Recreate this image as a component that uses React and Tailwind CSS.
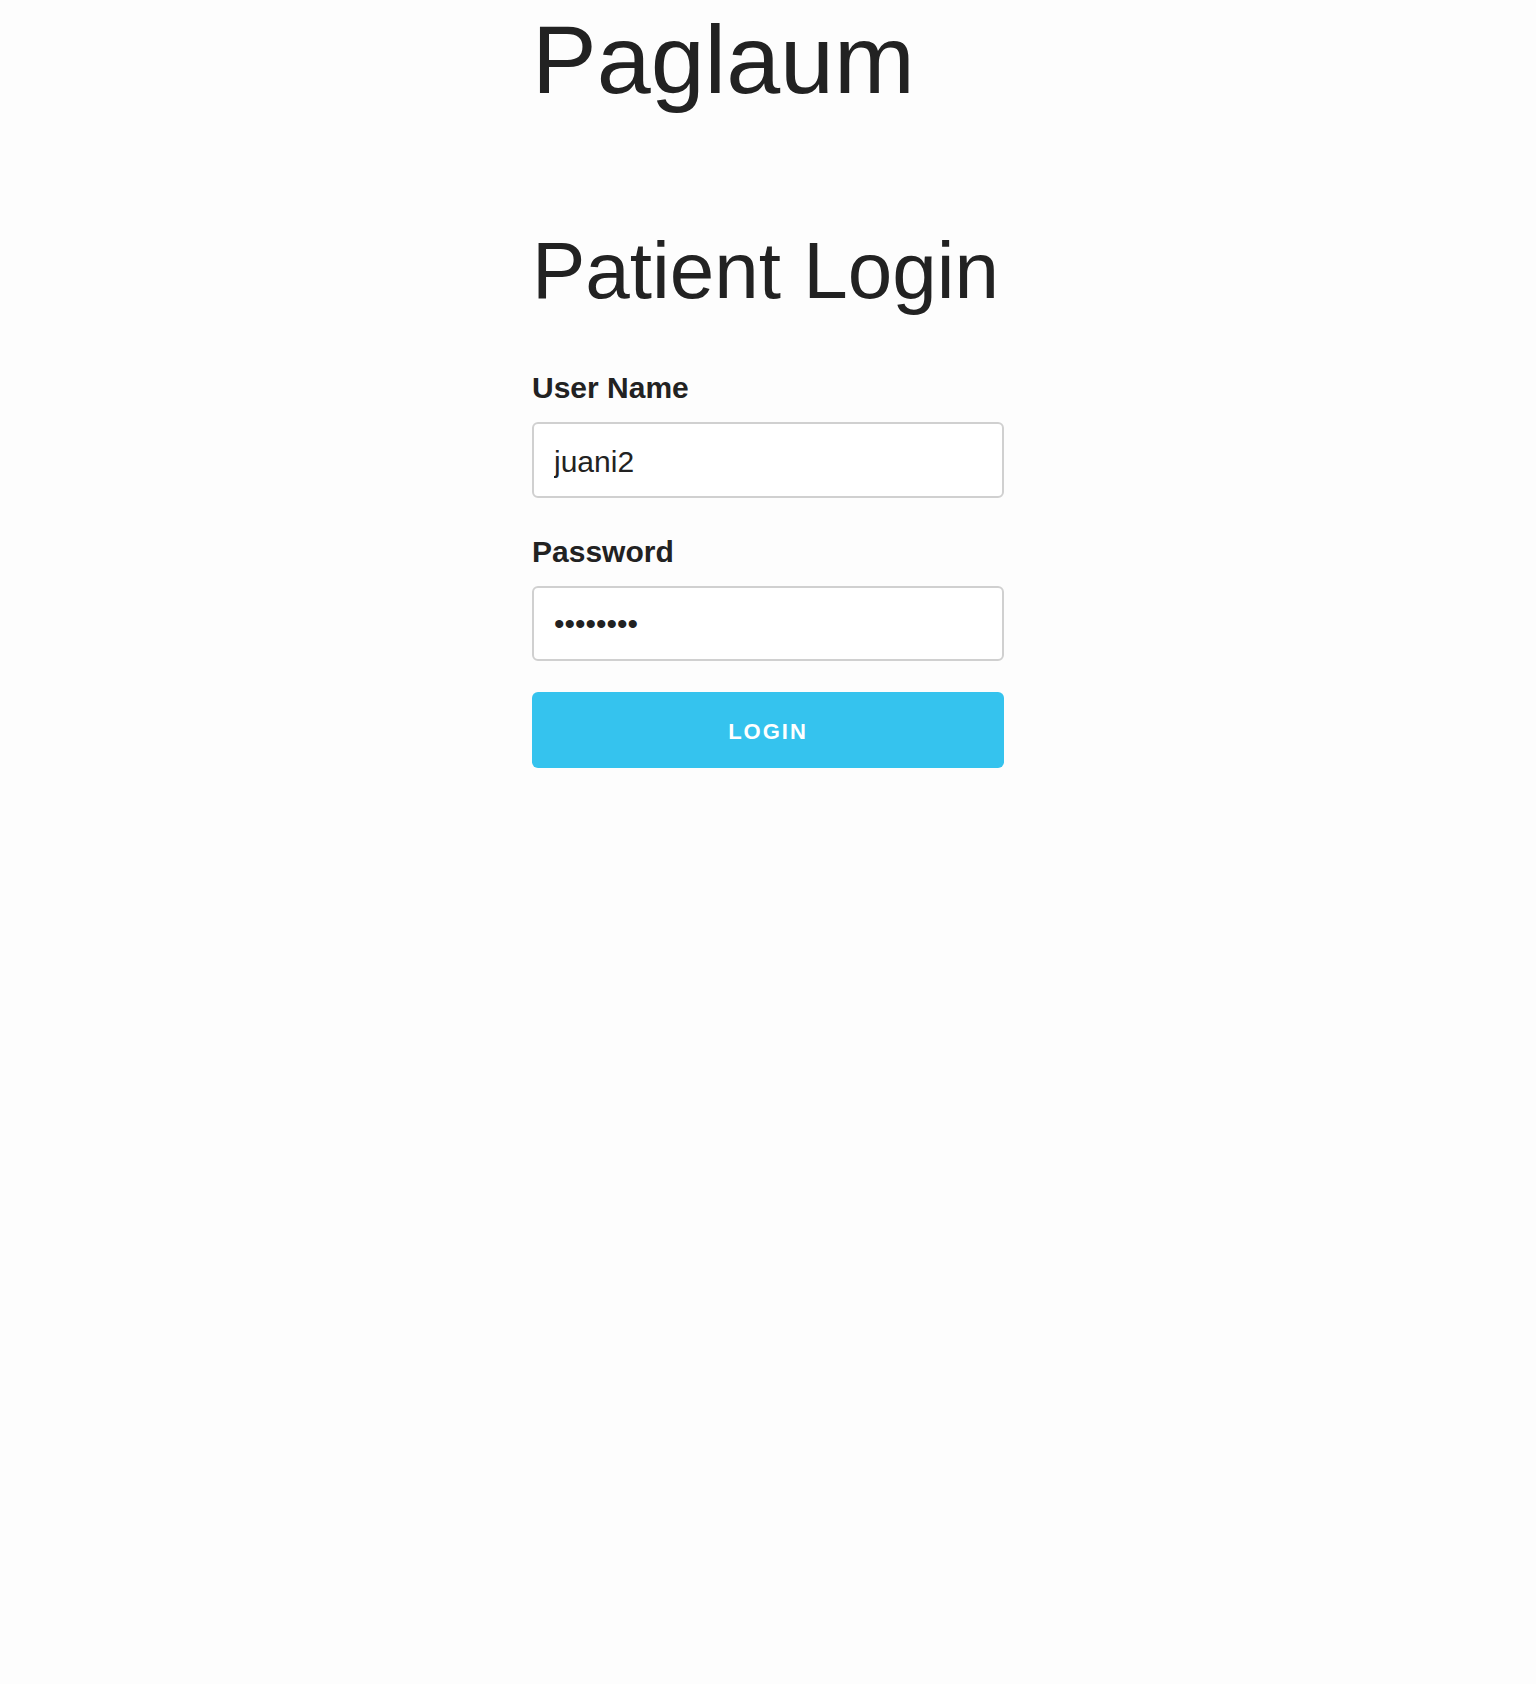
import React, { useState } from 'react';

const App = () => {
  const [userName, setUserName] = useState('juani2');
  const [password, setPassword] = useState('password');

  return (
    <div className="min-h-screen bg-[#fdfdfd] text-[#222222] font-['Liberation_Sans',Arial,sans-serif]">
      <div className="mx-auto w-[472px] flex flex-col">
        <h1 className="mt-[2px] text-[97px] leading-[1.2] font-normal">Paglaum</h1>

        <form className="mt-[105px] flex flex-col" onSubmit={(e) => e.preventDefault()}>
          <h2 className="text-[80px] leading-[1.2] font-normal">Patient Login</h2>

          <label htmlFor="username" className="mt-[46px] text-[30px] leading-[1.5] font-bold">
            User Name
          </label>
          <input
            id="username"
            type="text"
            value={userName}
            onChange={(e) => setUserName(e.target.value)}
            className="mt-[12px] h-[76px] w-full rounded-md border-2 border-[#d0d0d0] bg-white px-[20px] pt-[3px] text-[30px] text-[#222222] outline-none"
          />

          <label htmlFor="password" className="mt-[31px] text-[30px] leading-[1.5] font-bold">
            Password
          </label>
          <input
            id="password"
            type="password"
            value={password}
            onChange={(e) => setPassword(e.target.value)}
            className="mt-[12px] h-[75px] w-full rounded-md border-2 border-[#d0d0d0] bg-white px-[20px] text-[30px] text-[#222222] outline-none"
          />

          <button
            type="submit"
            className="mt-[31px] h-[76px] w-full rounded-md bg-[#35c3ee] pt-[2px] text-[22px] font-bold uppercase tracking-[2px] text-white"
          >
            Login
          </button>
        </form>
      </div>
    </div>
  );
};

export default App;
